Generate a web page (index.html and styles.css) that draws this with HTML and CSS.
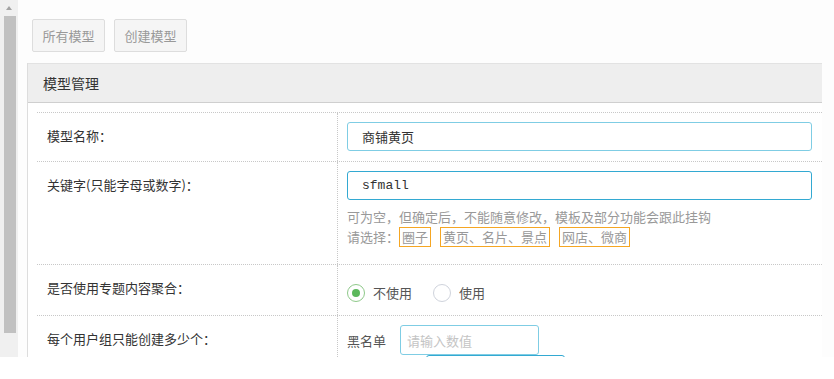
FILE: index.html
```html
<!DOCTYPE html>
<html lang="zh-CN">

<head>
    <meta charset="UTF-8">
    <meta name="viewport" content="width=device-width, initial-scale=1.0">
    <title>模型管理</title>
    <link rel="stylesheet" href="styles.css">
</head>

<body>
    <div class="frame">
        <div class="scrollbar">
            <span class="arrow"></span>
            <span class="thumb"></span>
        </div>

        <div class="main">
            <div class="toolbar">
                <button class="btn">所有模型</button>
                <button class="btn">创建模型</button>
            </div>

            <div class="panel">
                <div class="panel-head">模型管理</div>
                <div class="panel-body">
                    <div class="form-row">
                        <div class="label">模型名称：</div>
                        <div class="field">
                            <input class="text-input" type="text" value="商铺黄页">
                        </div>
                    </div>

                    <div class="form-row">
                        <div class="label">关键字(只能字母或数字)：</div>
                        <div class="field with-help">
                            <input class="text-input focus mono" type="text" value="sfmall">
                            <div class="help">
                                可为空，但确定后，不能随意修改，模板及部分功能会跟此挂钩<br>
                                请选择：<span class="tag">圈子</span><span class="tag">黄页、名片、景点</span><span class="tag">网店、微商</span>
                            </div>
                        </div>
                    </div>

                    <div class="form-row">
                        <div class="label">是否使用专题内容聚合：</div>
                        <div class="field radios">
                            <label class="radio"><span class="dot checked"></span>不使用</label>
                            <label class="radio"><span class="dot"></span>使用</label>
                        </div>
                    </div>

                    <div class="form-row">
                        <div class="label">每个用户组只能创建多少个：</div>
                        <div class="field groups">
                            <div class="group-line">
                                <span class="group-name">黑名单</span>
                                <input class="num-input" type="text" placeholder="请输入数值">
                            </div>
                            <div class="group-line second">
                                <input class="num-input focus" type="text">
                            </div>
                        </div>
                    </div>
                </div>
            </div>
        </div>
    </div>
</body>

</html>
```

FILE: styles.css
```css
body {
    margin: 0;
    padding: 0;
    background-color: #fff;
    font-family: "Noto Sans CJK SC", "Liberation Sans", sans-serif;
    font-size: 13px;
    color: #333;
    overflow: hidden;
}

.frame {
    display: flex;
    height: 357px;
    overflow: hidden;
    background-color: #fdfdfd;
}

/* 左侧滚动条 */
.scrollbar {
    position: relative;
    width: 18px;
    flex-shrink: 0;
    background-color: #f0f0f0;
}

.arrow {
    position: absolute;
    left: 6px;
    top: 6px;
    border-left: 3px solid transparent;
    border-right: 3px solid transparent;
    border-bottom: 4px solid #a3a3a3;
}

.thumb {
    position: absolute;
    left: 4px;
    top: 16px;
    width: 12px;
    height: 317px;
    background-color: #c1c1c1;
}

.main {
    flex: 1;
    padding: 19px 12px 0 9px;
}

.toolbar {
    display: flex;
    gap: 9px;
    margin-left: 5px;
}

.btn {
    height: 33px;
    width: 73px;
    padding: 0;
    font-family: inherit;
    font-size: 13px;
    color: #999;
    background-color: #f5f5f5;
    border: 1px solid #ddd;
    border-radius: 2px;
}

.panel {
    margin-top: 11px;
    border-left: 1px solid #ddd;
    height: 300px;
    background-color: #fff;
}

.panel-head {
    height: 38px;
    line-height: 38px;
    padding-left: 15px;
    font-size: 14px;
    color: #333;
    background-color: #eee;
    border-top: 1px solid #e2e2e2;
    border-bottom: 1px solid #cfcfcf;
}

.panel-body {
    padding: 9px 0 0 9px;
}

.form-row {
    display: grid;
    grid-template-columns: 300px 1fr;
    border-top: 1px dotted #c8c8c8;
}

.label {
    padding: 13px 0 0 10px;
    line-height: 20px;
    color: #333;
}

.field {
    border-left: 1px dotted #c8c8c8;
    padding: 9px 10px 10px 9px;
}

.field.with-help {
    padding-bottom: 17px;
}

.text-input {
    display: block;
    width: 100%;
    height: 29px;
    box-sizing: border-box;
    padding: 0 14px;
    font-family: inherit;
    font-size: 13px;
    color: #333;
    border: 1px solid #7fcde4;
    border-radius: 3px;
    outline: none;
}

.text-input.focus {
    border-color: #33a9d2;
}

.mono {
    font-family: "Liberation Mono", "DejaVu Sans Mono", monospace;
}

.help {
    margin-top: 7px;
    line-height: 20px;
    color: #999;
}

.tag {
    display: inline-block;
    height: 18px;
    line-height: 18px;
    padding: 0 2px;
    margin-right: 9px;
    border: 1px solid #f5a623;
    color: #999;
}

.radios {
    display: flex;
    gap: 21px;
    padding-top: 18px;
    padding-bottom: 12px;
}

.radio {
    display: flex;
    align-items: center;
    gap: 8px;
    line-height: 20px;
    color: #555;
}

.dot {
    position: relative;
    width: 16px;
    height: 16px;
    border: 1px solid #cfd3dc;
    border-radius: 50%;
    background-color: #fff;
}

.dot.checked {
    border-color: #8fc98a;
}

.dot.checked::after {
    content: "";
    position: absolute;
    left: 4px;
    top: 4px;
    width: 8px;
    height: 8px;
    border-radius: 50%;
    background-color: #5cb85c;
}

.groups {
    padding-top: 9px;
    padding-bottom: 0;
}

.group-line {
    display: flex;
    align-items: center;
    gap: 14px;
}

.group-line.second {
    padding-left: 79px;
}

.group-name {
    color: #555;
    white-space: nowrap;
}

.num-input {
    width: 139px;
    height: 30px;
    box-sizing: border-box;
    padding: 0 6px;
    font-family: inherit;
    font-size: 13px;
    border: 1px solid #7fcde4;
    border-radius: 3px;
    outline: none;
}

.num-input::placeholder {
    color: #c4c4c4;
}

.num-input.focus {
    border-color: #33a9d2;
}
```
